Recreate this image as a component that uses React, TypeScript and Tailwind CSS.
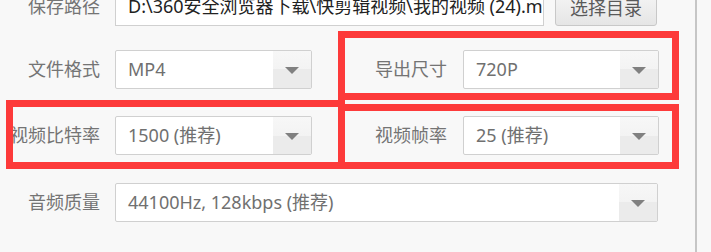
import React from "react";

const FONT = { fontFamily: "'Noto Sans', 'Noto Sans CJK SC', sans-serif" };

function Select({ value, width }: { value: string; width: string }) {
  return (
    <div
      className={`${width} h-[39px] flex items-stretch bg-white border border-[#d0d0d0] rounded-[2px] overflow-hidden`}
    >
      <div className="flex-1 flex items-center pl-[12px] text-[18px] text-[#707070] whitespace-nowrap overflow-hidden">
        {value}
      </div>
      <div className="w-[38px] flex items-center justify-center bg-[linear-gradient(#f7f7f7_0%,#f3f3f3_50%,#ebebeb_50%,#ebebeb_100%)]">
        <div className="w-0 h-0 border-l-[7px] border-r-[7px] border-t-[7px] border-l-transparent border-r-transparent border-t-[#808080] mt-[2px]" />
      </div>
    </div>
  );
}

function Label({ text, width }: { text: string; width: string }) {
  return (
    <div className={`${width} text-right text-[18px] text-[#747474] whitespace-nowrap shrink-0`}>
      {text}
    </div>
  );
}

export default function App() {
  return (
    <div
      className="relative w-[711px] h-[252px] overflow-hidden bg-[#f8f8f8] flex"
      style={FONT}
    >
      <div className="w-[697px] h-full border-r-2 border-[#c6c6c6] flex flex-col">
        {/* Row 0 */}
        <div className="flex items-start mt-[-13px]">
          <div className="h-[39px] flex items-center">
            <Label text="保存路径" width="w-[100px]" />
          </div>
          <div className="ml-[15px] w-[429px] h-[39px] bg-white border border-[#d0d0d0] flex items-center pl-[12px] overflow-hidden whitespace-nowrap text-[18px] text-[#222222]">
            D:\360安全浏览器下载\快剪辑视频\我的视频 (24).mp4
          </div>
          <button className="ml-[11px] mt-[3px] w-[102px] h-[36px] rounded-[3px] border border-[#c8c8c8] bg-[linear-gradient(#f6f6f6,#e5e5e5)] text-[18px] text-[#5a5a5a] flex items-center justify-center">
            选择目录
          </button>
        </div>
        {/* Row 1 */}
        <div className="flex items-center mt-[24px]">
          <Label text="文件格式" width="w-[100px]" />
          <div className="ml-[15px]">
            <Select value="MP4" width="w-[197px]" />
          </div>
          <Label text="导出尺寸" width="w-[135px]" />
          <div className="ml-[16px]">
            <Select value="720P" width="w-[196px]" />
          </div>
        </div>
        {/* Row 2 */}
        <div className="flex items-center mt-[27px]">
          <Label text="视频比特率" width="w-[100px]" />
          <div className="ml-[15px]">
            <Select value="1500 (推荐)" width="w-[197px]" />
          </div>
          <Label text="视频帧率" width="w-[135px]" />
          <div className="ml-[16px]">
            <Select value="25 (推荐)" width="w-[196px]" />
          </div>
        </div>
        {/* Row 3 */}
        <div className="flex items-center mt-[28px]">
          <Label text="音频质量" width="w-[100px]" />
          <div className="ml-[15px]">
            <Select value="44100Hz, 128kbps (推荐)" width="w-[543px]" />
          </div>
        </div>
      </div>

      {/* Red annotation boxes */}
      <div className="absolute left-[338px] top-[31px] w-[341px] h-[69px] border-[7px] border-[#fd3a3a]" />
      <div className="absolute left-[6px] top-[100px] w-[339px] h-[69px] border-[7px] border-[#fd3a3a]" />
      <div className="absolute left-[338px] top-[104px] w-[341px] h-[65px] border-[7px] border-[#fd3a3a]" />
    </div>
  );
}
